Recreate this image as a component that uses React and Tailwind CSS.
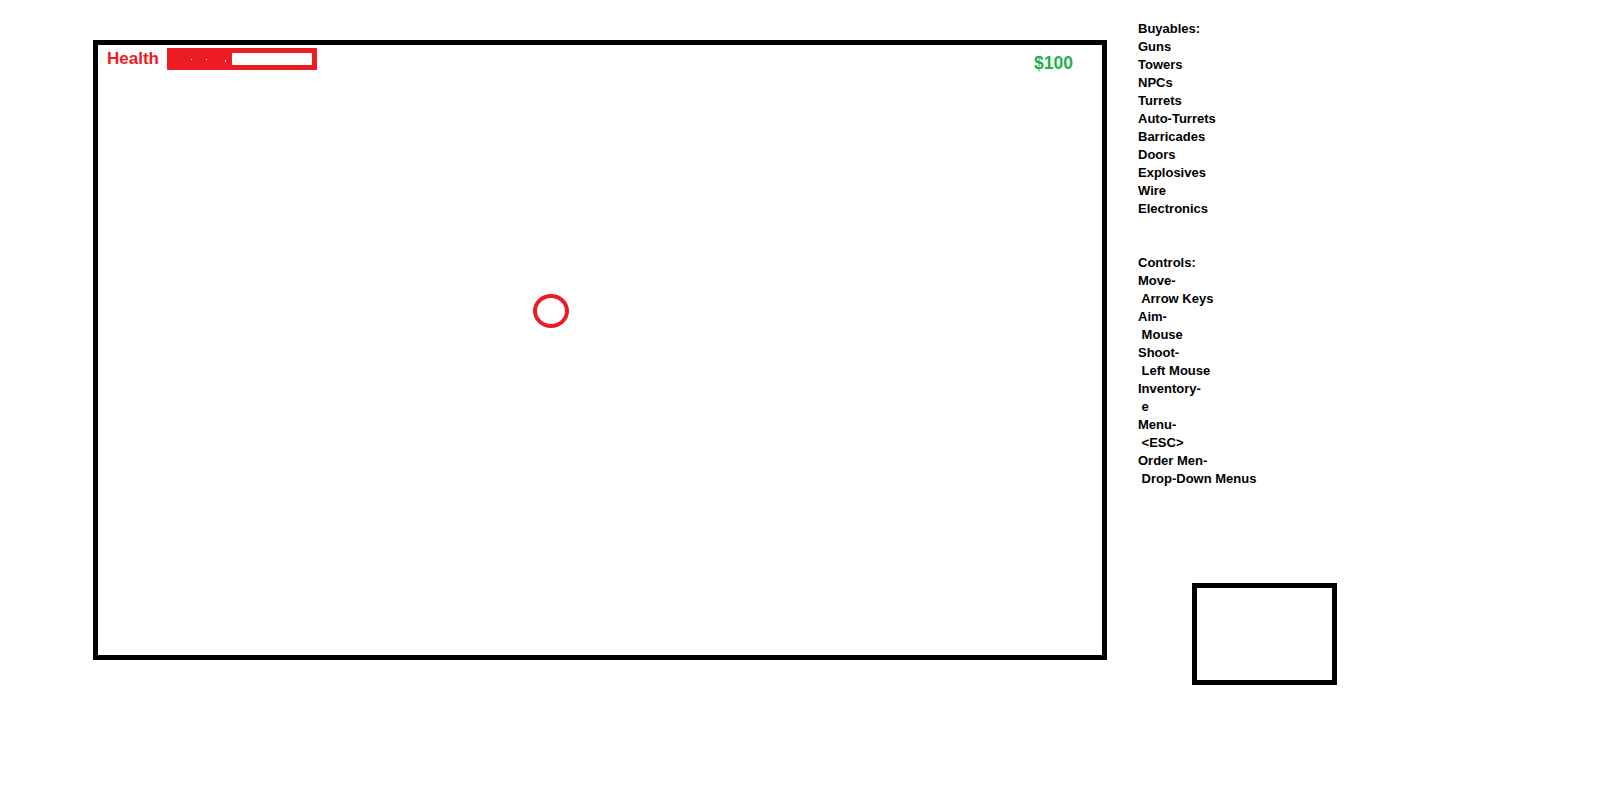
import React from 'react';

const buyables = ['Guns', 'Towers', 'NPCs', 'Turrets', 'Auto-Turrets', 'Barricades', 'Doors', 'Explosives', 'Wire', 'Electronics'];

const controls = [
    ['Move-', 'Arrow Keys'],
    ['Aim-', 'Mouse'],
    ['Shoot-', 'Left Mouse'],
    ['Inventory-', 'e'],
    ['Menu-', '<ESC>'],
    ['Order Men-', 'Drop-Down Menus'],
];

const HealthBar = () => (
    <div className="flex h-[22px] w-[150px] bg-[#ed1c24] p-[5px]">
        {/* depleted part, with the few stray pixels from the sketch */}
        <div className="flex w-[60px] items-center">
            <span className="ml-[19px] h-[1px] w-[1px] bg-white" />
            <span className="ml-[14px] h-[1px] w-[1px] bg-white" />
            <span className="ml-[18px] mt-[3px] h-[2px] w-[1px] bg-white" />
        </div>
        <div className="w-[80px] bg-white" />
    </div>
);

const GameView = () => (
    <div className="relative ml-[93px] mt-[40px] h-[620px] w-[1014px] shrink-0 border-[5px] border-black">
        <div className="flex items-start justify-between">
            <div className="flex items-center gap-[8px] pl-[9px] pt-[3px]">
                <span className="text-[17px] font-bold leading-[22px] text-[#ed1c24]">Health</span>
                <HealthBar />
            </div>
            <span className="mr-[29px] mt-[7px] text-[17.5px] font-bold leading-[22px] text-[#22b14c]">$100</span>
        </div>
        {/* player */}
        <div className="absolute left-[435px] top-[249px] h-[34px] w-[36px] rounded-[50%] border-[4px] border-[#ed1c24]" />
    </div>
);

const SidePanel = () => (
    <div className="ml-[31px] flex flex-col pt-[20px] text-[13px] font-bold leading-[18px] text-black">
        <div>Buyables:</div>
        {buyables.map((item) => (
            <div key={item}>{item}</div>
        ))}
        <div className="h-[36px]" />
        <div>Controls:</div>
        {controls.map(([action, key]) => (
            <React.Fragment key={action}>
                <div>{action}</div>
                <div className="whitespace-pre">{' ' + key}</div>
            </React.Fragment>
        ))}
        <div className="ml-[54px] mt-[95px] h-[102px] w-[145px] border-[5px] border-black" />
    </div>
);

const App = () => {
    return (
        <div className="flex min-h-[787px] w-full items-start bg-white font-['Liberation_Sans',Arial,sans-serif]">
            <GameView />
            <SidePanel />
        </div>
    );
};

export default App;
